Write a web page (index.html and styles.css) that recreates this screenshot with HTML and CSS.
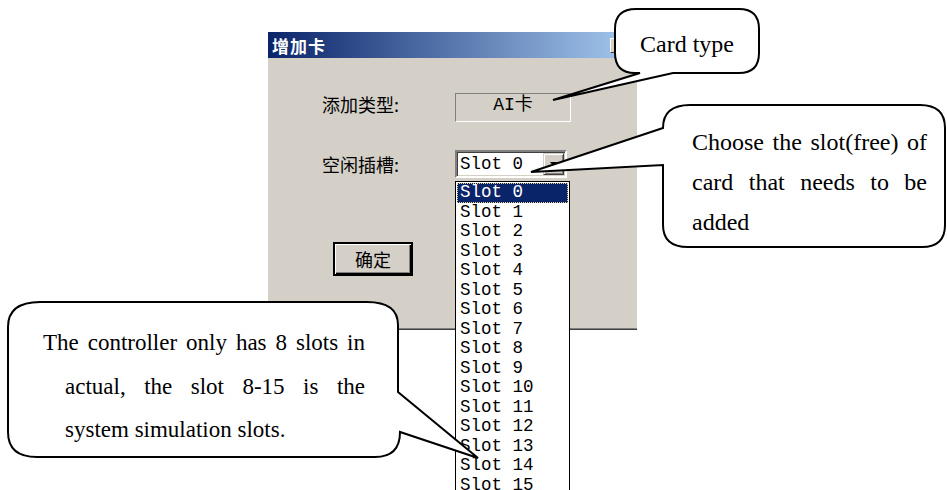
FILE: index.html
```html
<!DOCTYPE html>
<html lang="zh-CN">
<head>
    <meta charset="UTF-8">
    <meta name="viewport" content="width=device-width, initial-scale=1.0">
    <title>增加卡</title>
    <link rel="stylesheet" href="styles.css">
</head>
<body>
    <div class="page">
        <!-- Dialog window -->
        <div class="dialog">
            <div class="titlebar">
                <span class="title">增加卡</span>
                <span class="close">×</span>
            </div>
            <div class="dialog-body">
                <div class="field field-type">
                    <span class="label">添加类型:</span>
                    <div class="static">AI卡</div>
                </div>
                <div class="field">
                    <span class="label">空闲插槽:</span>
                    <div class="combo">
                        <span class="combo-value">Slot 0</span>
                        <span class="combo-btn">
                            <svg width="7" height="4" viewBox="0 0 7 4"><path d="M0 0h7L3.5 4z" fill="#000"/></svg>
                        </span>
                        <!-- open drop-down list -->
                        <ul class="combo-list">
                            <li class="selected">Slot 0</li>
                            <li>Slot 1</li>
                            <li>Slot 2</li>
                            <li>Slot 3</li>
                            <li>Slot 4</li>
                            <li>Slot 5</li>
                            <li>Slot 6</li>
                            <li>Slot 7</li>
                            <li>Slot 8</li>
                            <li>Slot 9</li>
                            <li>Slot 10</li>
                            <li>Slot 11</li>
                            <li>Slot 12</li>
                            <li>Slot 13</li>
                            <li>Slot 14</li>
                            <li>Slot 15</li>
                        </ul>
                    </div>
                </div>
                <button class="ok">确定</button>
            </div>
        </div>

        <!-- Callout shapes -->
        <svg class="callouts" width="947" height="490" viewBox="0 0 947 490">
            <path d="M636 9H739Q759 9 759 29V53Q759 73 739 73H673L553 100L640 73H635Q615 73 615 53V29Q615 9 636 9Z"/>
            <path d="M690 105H920Q945 105 945 128V225Q945 247 922 247H688Q663 247 663 225V165L531 172L663 128Q663 105 690 105Z"/>
            <path d="M40 302H367Q398 302 398 325V392L478 458L400 432Q400 457 375 457H37Q8 457 8 432V327Q8 302 40 302Z"/>
        </svg>

        <div class="note note-card">Card type</div>
        <p class="note note-slot">Choose the slot(free) of card that needs to be added</p>
        <p class="note note-sim">The controller only has 8 slots in actual, the slot 8-15 is the system simulation slots.</p>
    </div>
</body>
</html>
```

FILE: styles.css
```css
/* General styling */
body {
    margin: 0;
    background: #fff;
    font-family: "Noto Sans CJK SC", sans-serif;
}

.page {
    position: relative;
    width: 947px;
    height: 490px;
    overflow: hidden;
}

/* Dialog window */
.dialog {
    position: absolute;
    left: 268px;
    top: 32px;
    width: 369px;
    height: 296px;
    background: #d4d0c8;
    border-bottom: 1px solid #808080;
    box-shadow: 0 1px 0 #404040;
    display: flex;
    flex-direction: column;
}

.titlebar {
    height: 26px;
    background: linear-gradient(to right, #0a246a, #a6caf0);
    display: flex;
    align-items: center;
    justify-content: space-between;
    padding-left: 4px;
}

.title {
    color: #fff;
    font-weight: bold;
    font-size: 17px;
    letter-spacing: 1px;
}

.close {
    width: 16px;
    height: 15px;
    margin-right: 11px;
    background: #d4d0c8;
    box-sizing: border-box;
    border: 1px solid;
    border-color: #fff #404040 #404040 #fff;
    font: 12px/12px "DejaVu Sans", sans-serif;
    text-align: center;
}

.dialog-body {
    display: flex;
    flex-direction: column;
    padding: 35px 0 0 54px;
}

.field {
    display: flex;
    align-items: center;
}

.field + .field {
    margin-top: 28px;
}

.label {
    width: 133px;
    font-size: 18px;
    color: #000;
}

.field-type .label {
    margin-top: -8px;
}

/* Static text box */
.static {
    width: 116px;
    height: 29px;
    box-sizing: border-box;
    border: 1px solid;
    border-color: #808080 #fff #fff #808080;
    text-align: center;
    font: 18px/20px "Liberation Mono", "Noto Sans CJK SC", monospace;
    padding-top: 1px;
}

/* Combo box */
.combo {
    position: relative;
    width: 112px;
    height: 28px;
    box-sizing: border-box;
    border: 2px solid;
    border-color: #808080 #fff #fff #808080;
    box-shadow: inset 1px 1px 0 #404040, inset -1px -1px 0 #d4d0c8;
    background: #fff;
    display: flex;
    align-items: stretch;
}

.combo-value {
    flex: 1;
    padding: 1px 0 0 3px;
    font: 17.5px/22px "Liberation Mono", monospace;
}

.combo-btn {
    width: 21px;
    margin: 1px 1px 1px 0;
    box-sizing: border-box;
    background: #d4d0c8;
    border: 1px solid;
    border-color: #d4d0c8 #404040 #404040 #d4d0c8;
    box-shadow: inset 1px 1px 0 #fff, inset -1px -1px 0 #808080;
    display: flex;
    align-items: center;
    justify-content: center;
}

.combo-list {
    position: absolute;
    left: -2px;
    top: 29px;
    width: 115px;
    box-sizing: border-box;
    margin: 0;
    padding: 1px;
    list-style: none;
    background: #fff;
    border: 1px solid #000;
    font: 17.5px/19.5px "Liberation Mono", monospace;
}

.combo-list li {
    height: 19.5px;
    padding-left: 3px;
}

.combo-list .selected {
    background: #0a246a;
    color: #fff;
    outline: 1px dotted #e8d48c;
    outline-offset: -1px;
}

/* Default button */
.ok {
    align-self: flex-start;
    margin: 64px 0 0 11px;
    width: 80px;
    height: 34px;
    background: #d4d0c8;
    border: 2px solid #000;
    box-shadow: inset 1px 1px 0 #fff, inset -1px -1px 0 #000, inset -2px -2px 0 #808080;
    font-family: "Noto Sans CJK SC", sans-serif;
    font-size: 18px;
    padding: 0;
}

/* Callouts */
.callouts {
    position: absolute;
    left: 0;
    top: 0;
}

.callouts path {
    fill: #fff;
    stroke: #000;
    stroke-width: 2;
}

.note {
    position: absolute;
    margin: 0;
    font-family: "Liberation Serif", "Times New Roman", serif;
    color: #000;
}

.note-card {
    left: 615px;
    top: 29px;
    width: 144px;
    text-align: center;
    font-size: 24px;
    line-height: 30px;
}

.note-slot {
    left: 692px;
    top: 122px;
    width: 235px;
    font-size: 24px;
    line-height: 40px;
    text-align: justify;
}

.note-sim {
    left: 65px;
    top: 321px;
    width: 300px;
    text-indent: -22px;
    font-size: 23px;
    line-height: 43.5px;
    text-align: justify;
}
```
